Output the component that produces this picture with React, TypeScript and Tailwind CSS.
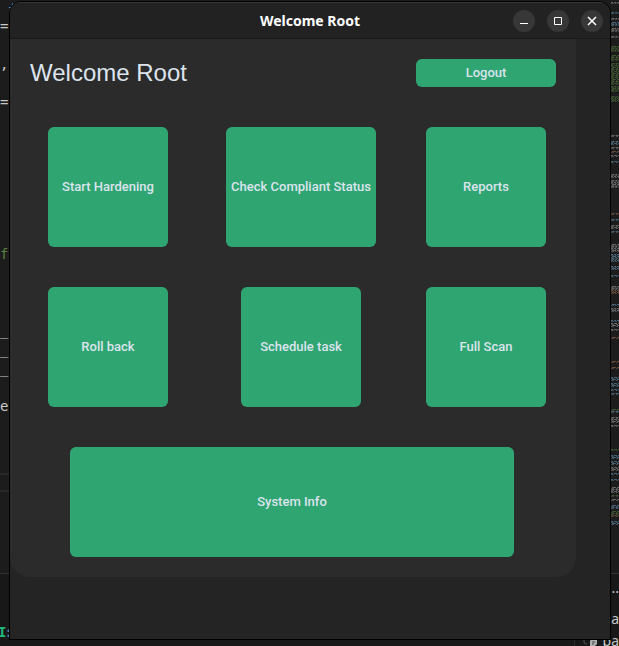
import React from "react";

const editorRows: { text: string; tone: string }[] = Array.from({ length: 22 }, () => ({ text: "", tone: "text-[#c8c8c8]" }));
editorRows[0] = { text: " +", tone: "text-[#4fa3c8]" };
editorRows[1].text = "=";
editorRows[3].text = ",";
editorRows[5].text = "=";
editorRows[13] = { text: "f", tone: "text-[#5a8040]" };
editorRows[17].text = "_";
editorRows[18].text = "_";
editorRows[19].text = "_";
editorRows[21].text = "e";

const W = "#8a8a8a", B = "#5a86a3", G = "#4c7038", O = "#8d5f48";
const minimap: [number, number, string][] = [
  [0, 1, W], [10, 1, B], [16, 1, W], [20, 4, B], [26, 4, W], [34, 1, W],
  [44, 6, G], [53, 6, G], [61, 5, G], [67, 15, G], [84, 5, G], [94, 5, G],
  [133, 1, W], [139, 3, B], [145, 1, W], [149, 1, O], [153, 1, W], [159, 1, B],
  [172, 4, W], [178, 8, W], [211, 1, O], [217, 1, B], [223, 4, W], [229, 1, B],
  [242, 8, W], [252, 8, B], [264, 4, B], [273, 1, B], [284, 4, W], [288, 4, O],
  [302, 1, B], [306, 4, W], [318, 2, B], [321, 4, W], [327, 1, W], [335, 1, O],
  [359, 1, O], [365, 1, O], [375, 4, B], [381, 3, B], [387, 1, B], [391, 1, B],
  [407, 1, G], [409, 1, B], [415, 5, W], [423, 1, W], [447, 1, G], [453, 3, B],
  [459, 3, B], [465, 3, W], [471, 1, B], [477, 1, B], [485, 5, W], [493, 1, G],
  [497, 1, W], [503, 3, B], [509, 3, G], [513, 2, O], [519, 3, B],
];

const codeLines = minimap.flatMap(([y, h, color]) =>
  Array.from({ length: Math.ceil(h / 2) }, (_, i) => ({ y: y + i * 2, color })),
);

function Minimap() {
  return (
    <svg className="mt-0.5 h-[530px] w-2 shrink-0" viewBox="0 0 8 530" aria-hidden="true">
      {codeLines.map(({ y, color }, i) => (
        <g key={i} stroke={color}>
          <path d={`M${(y % 3) * 0.5} ${y + 0.5}H8`} strokeDasharray={`${2 + ((y * 7) % 3)} 1 ${2 + (y % 2)} 1`} opacity="0.65" />
          <path d={`M0 ${y + 1.5}H8`} strokeDasharray={`3 ${1 + ((y * 5) % 2)} 2 1`} opacity="0.45" />
        </g>
      ))}
    </svg>
  );
}

function Desktop() {
  return (
    <div className="col-start-1 row-start-1 flex h-screen flex-col overflow-hidden bg-[#1c1c1c]">
      <div className="flex h-[573px] shrink-0 justify-between">
        <div className="w-5">
          <div className="-mt-0.5 font-['DejaVu_Sans_Mono',monospace] text-sm leading-[19px]">
            {editorRows.map((row, i) => (
              <div key={i} className={`h-[19px] whitespace-pre ${row.tone}`}>{row.text}</div>
            ))}
          </div>
          <div className="mt-[57px] h-[19px] border-y-2 border-[#282828]" />
        </div>
        <Minimap />
      </div>
      <div className="flex grow justify-between border-t border-[#333333] bg-[#181818] font-['DejaVu_Sans_Mono',monospace] text-sm">
        <div className="-ml-0.5 flex items-start pt-12 font-bold">
          <span className="text-[#23b77c]">I</span>
          <span className="-ml-0.5 text-[#4a80a8]">:</span>
        </div>
        <div className="flex w-[45px] flex-col items-end border-l border-[#2b2b2b] pt-1.5 font-['Noto_Sans',sans-serif] text-sm leading-[22px] text-[#c8c8c8]">
          <span className="h-4 leading-4">..</span>
          <span className="mt-3">ba</span>
          <span className="flex shrink-0 items-start gap-1">
            <svg className="mt-2 h-3 w-4" viewBox="0 0 16 12" fill="none" aria-hidden="true">
              <path d="M1 0v4q0 2 3 2" stroke="#555555" />
              <path d="M8 1h6v5l-3 3H7V3z" fill="#b0b0b0" />
              <path d="M9 4h3M9 6h2" stroke="#444444" />
            </svg>
            pa
          </span>
        </div>
      </div>
    </div>
  );
}

const windowControl = "flex size-[22px] items-center justify-center rounded-full bg-[#373737] text-white";

function TitleBar() {
  return (
    <header className="grid h-9 grid-cols-[1fr_auto_1fr] items-center border-b border-[#191919] bg-[#222222] px-[7px]">
      <h1 className="col-start-2 font-['Noto_Sans',sans-serif] text-sm font-bold text-white">Welcome Root</h1>
      <div className="flex justify-end gap-3">
        <button className={windowControl} aria-label="Minimize">
          <svg className="size-3" viewBox="0 0 12 12" stroke="currentColor"><path d="M2 8.5h8" /></svg>
        </button>
        <button className={windowControl} aria-label="Maximize">
          <svg className="size-3" viewBox="0 0 12 12" fill="none" stroke="currentColor"><path d="M2.5 2.5h7v7h-7z" /></svg>
        </button>
        <button className={windowControl} aria-label="Close">
          <svg className="size-3" viewBox="0 0 12 12" stroke="currentColor" strokeWidth="1.5"><path d="M2 2l8 8M10 2l-8 8" /></svg>
        </button>
      </div>
    </header>
  );
}

const action = "rounded-md bg-[#2fa572] font-['Roboto',sans-serif] text-[13px] font-medium text-[#dce4ee] hover:bg-[#106a43]";

function Tile({ label, wide = false }: { label: string; wide?: boolean }) {
  return <button className={`${action} h-[120px] ${wide ? "w-[150px]" : "w-[120px]"}`}>{label}</button>;
}

export default function App() {
  return (
    <div className="grid min-h-screen">
      <Desktop />
      <div className="z-10 col-start-1 row-start-1 mt-px mr-2 mb-1.5 ml-[9px] flex flex-col overflow-hidden rounded-t-xl border border-black bg-[#242424]">
        <div className="border-t border-[#363636]"><TitleBar /></div>
        <main className="mr-[34px] rounded-b-[20px] bg-[#2b2b2b] py-5">
          <div className="flex items-center justify-between px-5">
            <h2 className="font-['Liberation_Sans',sans-serif] text-2xl leading-7 text-[#dce4ee]">Welcome Root</h2>
            <button className={`${action} h-7 w-[140px]`}>Logout</button>
          </div>
          <div className="mt-10 grid grid-cols-[196fr_190fr_180fr] justify-items-center gap-y-10">
            <Tile label="Start Hardening" />
            <Tile label="Check Compliant Status" wide />
            <Tile label="Reports" />
            <Tile label="Roll back" />
            <Tile label="Schedule task" />
            <Tile label="Full Scan" />
          </div>
          <div className="mt-10 flex pr-[62px] pl-[60px]">
            <button className={`${action} h-[110px] grow`}>System Info</button>
          </div>
        </main>
      </div>
    </div>
  );
}
